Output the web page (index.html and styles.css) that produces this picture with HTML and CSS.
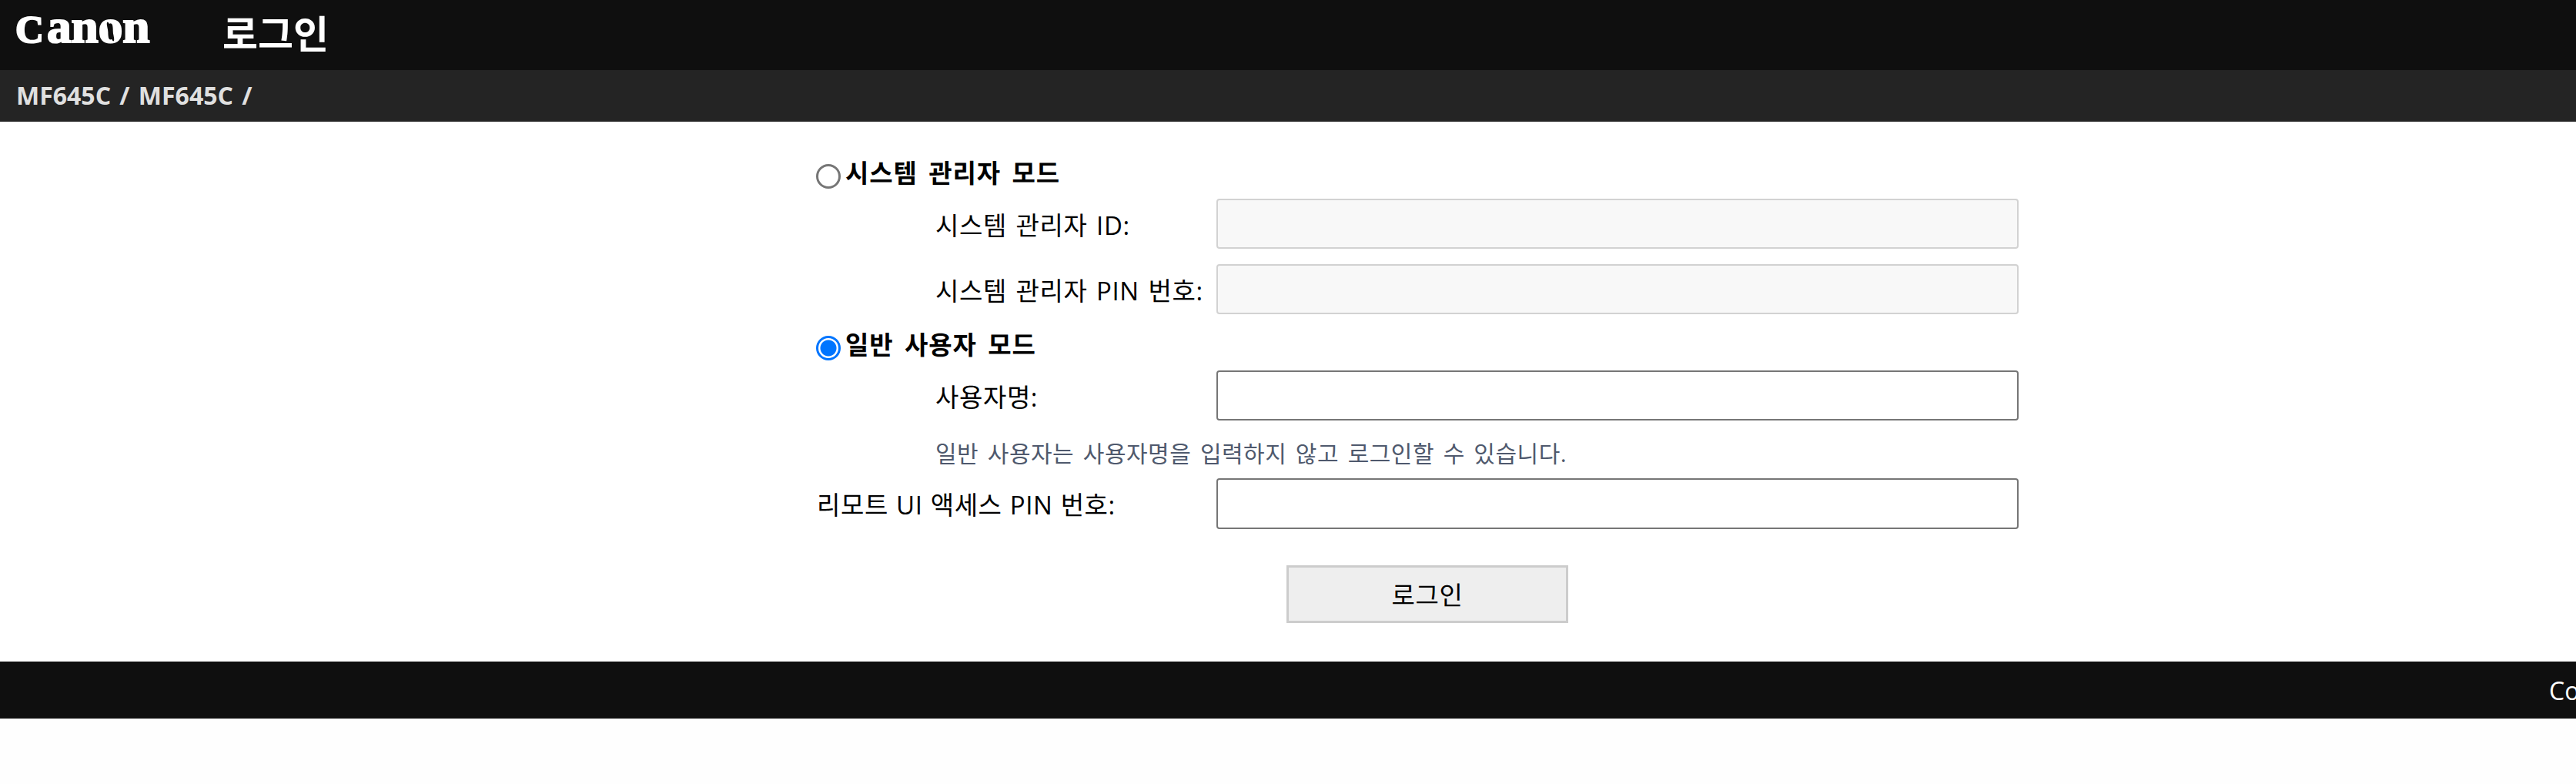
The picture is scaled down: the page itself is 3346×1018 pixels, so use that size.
FILE: index.html
```html
<!DOCTYPE html>
<html lang="ko">
<head>
<meta charset="utf-8">
<title>로그인</title>
<link rel="stylesheet" href="styles.css">
</head>
<body>
<header class="topbar">
  <svg class="logo" viewBox="0 0 180 60" width="180" height="60" role="img" aria-label="Canon">
    <text class="logo-text" x="0" y="46" transform="scale(1.02 1)"><tspan class="logo-c">C</tspan><tspan class="logo-rest" dx="4">anon</tspan></text>
    <ellipse class="logo-cut" cx="123.500" cy="32" rx="2.600" ry="13" transform="rotate(-18 123.500 32)"/>
    <path class="logo-cut" d="M28 25 C22 29 19 35 20 41 C16 35 19 27 28 25Z"/>
  </svg>
  <h1 class="title">로그인</h1>
</header>
<nav class="crumbs">MF645C / MF645C /</nav>
<main class="main">
  <form class="form">
    <label class="mode"><input class="radio" type="radio" name="mode"><span>시스템 관리자 모드</span></label>
    <div class="field sub"><label class="field-label">시스템 관리자 ID:</label><input class="text" type="text" disabled></div>
    <div class="field sub gap"><label class="field-label">시스템 관리자 PIN 번호:</label><input class="text" type="password" disabled></div>
    <label class="mode second"><input class="radio" type="radio" name="mode" checked><span>일반 사용자 모드</span></label>
    <div class="field sub"><label class="field-label">사용자명:</label><input class="text" type="text"></div>
    <p class="hint">일반 사용자는 사용자명을 입력하지 않고 로그인할 수 있습니다.</p>
    <div class="field wide"><label class="field-label">리모트 UI 액세스 PIN 번호:</label><input class="text tall" type="password"></div>
    <button class="submit" type="button">로그인</button>
  </form>
</main>
<footer class="footer"><span>Co</span></footer>
</body>
</html>
```
FILE: styles.css
```css
* { box-sizing: border-box; }
html, body { margin: 0; padding: 0; overflow-x: hidden; background: #fefefe; }
body { font-family: "Open Sans", "Noto Sans CJK KR", sans-serif; font-size: 33px; word-spacing: 2.5px; letter-spacing: 0.6px; color: #000; }
.topbar { height: 91px; background: #0f0f0f; display: flex; align-items: center; padding-left: 20px; }
.logo { display: block; margin-top: -25px; margin-bottom: -12px; flex: none; overflow: visible; }
.logo-text { font-family: "Liberation Serif", serif; font-weight: 700; letter-spacing: 0; word-spacing: 0; fill: #fff; stroke: #fff; stroke-width: 2.2px; }
.logo-c { font-size: 50px; }
.logo-rest { font-size: 62px; }
.logo-cut { fill: #0f0f0f; }
.title { margin: 0 0 0 89px; font-size: 50px; font-weight: 700; letter-spacing: 0; color: #fff; line-height: 1; position: relative; top: -2px; }
.crumbs { height: 67px; background: #242424; color: #e0e0e0; font-size: 32px; font-weight: 700; letter-spacing: 0; word-spacing: 3px; padding-left: 21px; line-height: 66px; }
.main { background: #fff; padding: 55px 0 50px 1060px; }
.form { display: flex; flex-direction: column; width: 1562px; }
.mode { display: flex; align-items: center; gap: 6px; height: 32px; margin-bottom: 13px; font-weight: 700; letter-spacing: 0.9px; word-spacing: 5px; }
.mode.second { margin-top: 28px; margin-bottom: 13px; }
.mode span { position: relative; top: -6px; }
.radio { appearance: none; width: 32px; height: 32px; margin: 0; border: 3px solid #767676; border-radius: 50%; background: #fff; flex: none; }
.radio:checked { border-color: #0075ff; background: radial-gradient(circle, #0075ff 0 10px, #fff 11px); }
.field { display: flex; align-items: center; justify-content: space-between; }
.field.sub { padding-left: 155px; }
.field.wide { word-spacing: 1px; padding-left: 1px; }
.field.gap { margin-top: 20px; }
.field-label { white-space: nowrap; }
.text { width: 1042px; height: 65px; border: 2px solid #767676; border-radius: 4px; background: #fff; flex: none; }
.text.tall { height: 66px; }
.text:disabled { border-color: #d2d2d2; background: #f8f8f8; }
.hint { margin: 0; height: 75px; padding: 25px 0 0 155px; color: #4f596d; font-size: 30px; letter-spacing: 0.5px; word-spacing: 3.3px; line-height: 36px; }
.submit { align-self: flex-start; margin: 47px 0 0 611px; width: 366px; height: 75px; border: 3px solid #ccc; background: #eee; color: #000; font: inherit; letter-spacing: inherit; border-radius: 0; padding: 0 0 2px; }
.footer { height: 74px; background: #0f0f0f; color: #fff; font-size: 32px; letter-spacing: 0; display: flex; align-items: center; padding-left: 3311px; white-space: nowrap; overflow: hidden; }
.footer span { flex: none; }
```
